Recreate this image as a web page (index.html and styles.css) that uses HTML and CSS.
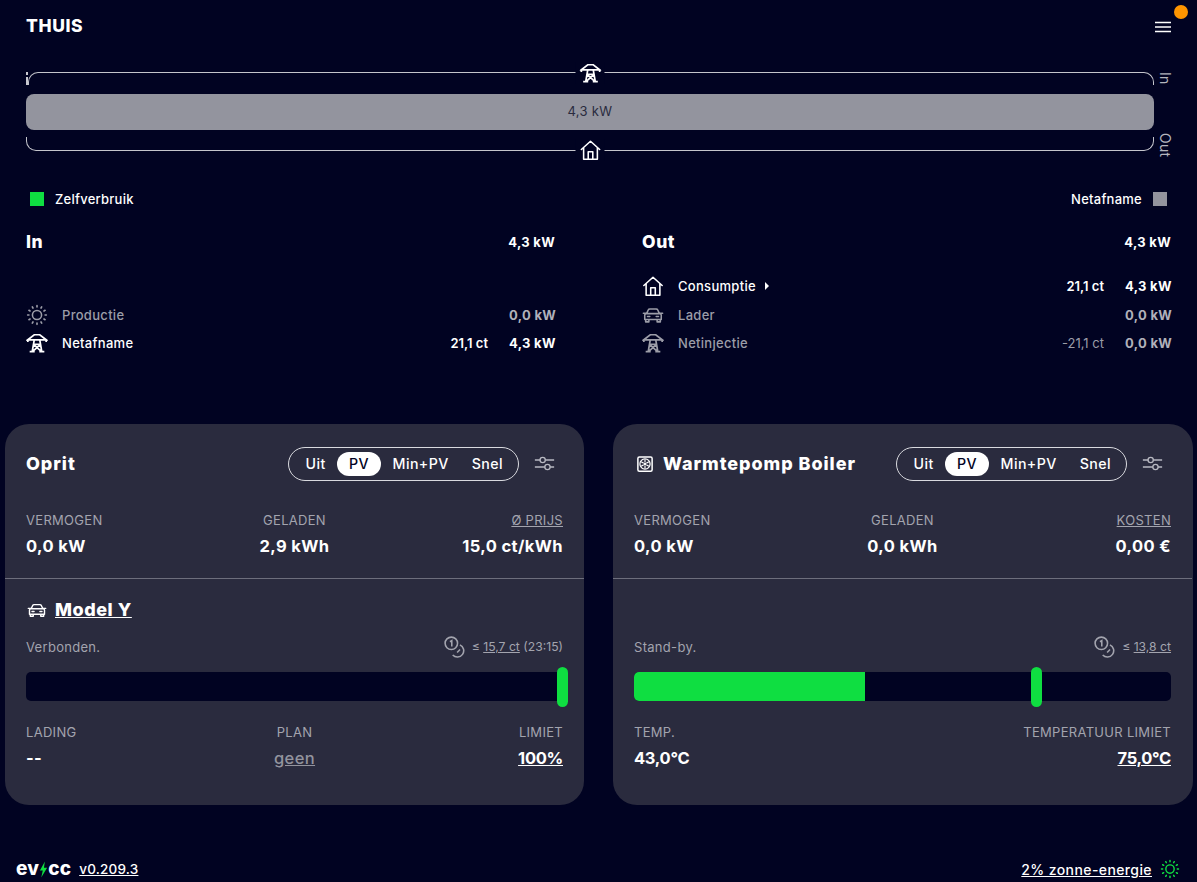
FILE: index.html
```html
<!DOCTYPE html>
<html lang="nl">
<head>
<meta charset="utf-8">
<title>evcc</title>
<link rel="stylesheet" href="styles.css">
</head>
<body>
<svg class="defs" width="0" height="0" aria-hidden="true">
  <symbol id="i-tower" viewBox="0 0 24 24"><path d="M9 3h6l7 5.500H2ZM2 8v3M22 8v3M9 8.500 6.800 21.500M15 8.500l2.200 13M8 13.500h8M8 13.500l9 8M16 13.500l-9 8M4 21.500h5.500M14.500 21.500H20" fill="none" stroke="currentColor" stroke-width="1.900"/></symbol>
  <symbol id="i-home" viewBox="0 0 24 24"><path d="M2 11.500 12 2.500l10 9M4.500 9.500V22h15V9.500M9.500 22v-8h5v8" fill="none" stroke="currentColor" stroke-width="1.700" stroke-linejoin="round" stroke-linecap="round"/></symbol>
  <symbol id="i-sun" viewBox="0 0 24 24"><circle cx="12" cy="12" r="5" fill="none" stroke="currentColor" stroke-width="1.700"/><path d="M12 1.800v1.400M12 20.800v1.400M1.800 12h1.400M20.800 12h1.400M6.900 3.200l.7 1.200M16.400 19.600l.7 1.200M3.200 6.900l1.200.7M19.600 16.400l1.200.7M3.200 17.100l1.200-.7M19.600 7.600l1.200-.7M6.900 20.800l.7-1.200M16.400 4.400l.7-1.200" fill="none" stroke="currentColor" stroke-width="1.800" stroke-linecap="round"/></symbol>
  <symbol id="i-car" viewBox="0 0 24 24"><path d="M5 10.500 6.800 6.500C7.100 5.800 7.800 5.500 8.500 5.500h7c.7 0 1.400.3 1.700 1L19 10.500M4.500 10.500h15c.8 0 1.500.7 1.500 1.500v5H3v-5c0-.8.700-1.500 1.500-1.500ZM1.500 10h3M19.500 10h3M4 17v2.500h3.500V17M16.500 17v2.500H20V17M6 13.700h2.500M15.500 13.700H18" fill="none" stroke="currentColor" stroke-width="1.700" stroke-linejoin="round" stroke-linecap="round"/></symbol>
  <symbol id="i-tune" viewBox="0 0 24 24"><path d="M1 8h6M12.800 8H23M1 16h11.500M18.300 16H23" fill="none" stroke="currentColor" stroke-width="1.500"/><circle cx="9.900" cy="8" r="3" fill="none" stroke="currentColor" stroke-width="1.500"/><circle cx="15.400" cy="16" r="3" fill="none" stroke="currentColor" stroke-width="1.500"/></symbol>
  <symbol id="i-coins" viewBox="0 0 24 24"><circle cx="8" cy="8" r="6.800" fill="none" stroke="currentColor" stroke-width="1.700"/><path d="M6.500 6.300 8.500 5v6.500" fill="none" stroke="currentColor" stroke-width="1.700"/><path d="M17.300 9.700a6.900 6.900 0 1 1-7.800 11" fill="none" stroke="currentColor" stroke-width="1.700"/><path d="M17.500 14.800 14.300 18" fill="none" stroke="currentColor" stroke-width="1.700"/></symbol>
  <symbol id="i-pump" viewBox="0 0 24 24"><rect x="2.500" y="2.500" width="19" height="19" rx="2" fill="none" stroke="currentColor" stroke-width="2"/><circle cx="12" cy="12" r="6.800" fill="none" stroke="currentColor" stroke-width="1.600"/><circle cx="12" cy="12" r="1.600" fill="currentColor"/><path d="M12 6v4M12 14v4M6.800 9l3.500 2M13.700 13l3.500 2M6.800 15l3.500-2M13.700 11l3.500-2" stroke="currentColor" stroke-width="1.500"/></symbol>
</svg>

<header class="topbar">
  <h1 class="site-title">THUIS</h1>
  <button class="menu" aria-label="Menu">
    <svg class="menu-icon" viewBox="0 0 16 12"><path d="M0 1.500h16M0 6h16M0 10.500h16" fill="none" stroke="currentColor" stroke-width="1.500"/></svg>
    <span class="menu-dot"></span>
  </button>
</header>

<section class="flow">
  <div class="flow-main">
    <div class="bracket bracket-top">
      <span class="flow-icon"><svg class="ic22"><use href="#i-tower"/></svg></span>
    </div>
    <div class="flow-bar">4,3 kW</div>
    <div class="bracket bracket-bottom">
      <span class="flow-icon"><svg class="ic22"><use href="#i-home"/></svg></span>
    </div>
    <span class="clip-tick"></span>
  </div>
  <div class="flow-side">
    <span>In</span>
    <span>Out</span>
  </div>
</section>

<div class="legend">
  <div class="legend-item"><span class="swatch swatch-green"></span>Zelfverbruik</div>
  <div class="legend-item">Netafname<span class="swatch swatch-gray"></span></div>
</div>

<section class="balance">
  <div class="balance-col">
    <div class="balance-head"><h2>In</h2><strong>4,3 kW</strong></div>
    <ul class="rows">
      <li class="row row-empty"></li>
      <li class="row muted">
        <svg class="ic22"><use href="#i-sun"/></svg><span class="row-name">Productie</span><span class="row-power">0,0 kW</span>
      </li>
      <li class="row active">
        <svg class="ic22"><use href="#i-tower"/></svg><span class="row-name">Netafname</span><span class="row-price">21,1 ct</span><span class="row-power">4,3 kW</span>
      </li>
    </ul>
  </div>
  <div class="balance-col">
    <div class="balance-head"><h2>Out</h2><strong>4,3 kW</strong></div>
    <ul class="rows">
      <li class="row active">
        <svg class="ic22"><use href="#i-home"/></svg><span class="row-name">Consumptie<i class="caret"></i></span><span class="row-price">21,1 ct</span><span class="row-power">4,3 kW</span>
      </li>
      <li class="row muted">
        <svg class="ic22"><use href="#i-car"/></svg><span class="row-name">Lader</span><span class="row-power">0,0 kW</span>
      </li>
      <li class="row muted">
        <svg class="ic22"><use href="#i-tower"/></svg><span class="row-name">Netinjectie</span><span class="row-price">-21,1 ct</span><span class="row-power">0,0 kW</span>
      </li>
    </ul>
  </div>
</section>

<main class="cards">
  <article class="card">
    <div class="card-head">
      <h3 class="card-title">Oprit</h3>
      <div class="modes"><span class="mode">Uit</span><span class="mode mode-on">PV</span><span class="mode">Min+PV</span><span class="mode">Snel</span></div>
      <svg class="tune"><use href="#i-tune"/></svg>
    </div>
    <div class="stats">
      <div class="stat"><div class="label">Vermogen</div><div class="value">0,0 kW</div></div>
      <div class="stat stat-mid"><div class="label">Geladen</div><div class="value">2,9 kWh</div></div>
      <div class="stat stat-end"><div class="label link">ø Prijs</div><div class="value">15,0 ct/kWh</div></div>
    </div>
    <hr class="divider">
    <div class="vehicle"><svg class="car"><use href="#i-car"/></svg><span class="vehicle-name">Model Y</span></div>
    <div class="status">
      <span>Verbonden.</span>
      <span class="smart"><svg class="coins"><use href="#i-coins"/></svg><span>≤ <u>15,7 ct</u> (23:15)</span></span>
    </div>
    <div class="track">
      <span class="knob" style="left:99.100%"></span>
    </div>
    <div class="stats stats-low">
      <div class="stat"><div class="label">Lading</div><div class="value">--</div></div>
      <div class="stat stat-mid"><div class="label">Plan</div><div class="value value-dim">geen</div></div>
      <div class="stat stat-end"><div class="label">Limiet</div><div class="value value-link">100%</div></div>
    </div>
  </article>

  <article class="card">
    <div class="card-head">
      <h3 class="card-title"><svg class="pump"><use href="#i-pump"/></svg>Warmtepomp Boiler</h3>
      <div class="modes"><span class="mode">Uit</span><span class="mode mode-on">PV</span><span class="mode">Min+PV</span><span class="mode">Snel</span></div>
      <svg class="tune"><use href="#i-tune"/></svg>
    </div>
    <div class="stats">
      <div class="stat"><div class="label">Vermogen</div><div class="value">0,0 kW</div></div>
      <div class="stat stat-mid"><div class="label">Geladen</div><div class="value">0,0 kWh</div></div>
      <div class="stat stat-end"><div class="label link">Kosten</div><div class="value">0,00 €</div></div>
    </div>
    <hr class="divider">
    <div class="vehicle"></div>
    <div class="status">
      <span>Stand-by.</span>
      <span class="smart"><svg class="coins"><use href="#i-coins"/></svg><span>≤ <u>13,8 ct</u></span></span>
    </div>
    <div class="track">
      <span class="fill" style="width:43%"></span>
      <span class="knob" style="left:74.100%"></span>
    </div>
    <div class="stats stats-low stats-two">
      <div class="stat"><div class="label">Temp.</div><div class="value value-tight">43,0°C</div></div>
      <div class="stat stat-end"><div class="label">Temperatuur limiet</div><div class="value value-link">75,0°C</div></div>
    </div>
  </article>
</main>

<footer class="footer">
  <div class="footer-left">
    <span class="logo">ev<svg class="bolt" viewBox="0 0 10 18"><path d="M6.500 0 1 10h3.200L2.500 18 9 7H5.500Z" fill="#0fde41"/></svg>cc</span>
    <u class="version">v0.209.3</u>
  </div>
  <div class="footer-right">
    <u>2% zonne-energie</u>
    <svg class="ic20 sun-green"><use href="#i-sun"/></svg>
  </div>
</footer>
</body>
</html>
```
FILE: styles.css
```css
* { box-sizing: border-box; }
html, body { margin: 0; padding: 0; }
body {
  width: 1197px;
  height: 882px;
  overflow: hidden;
  background: #010322;
  color: #fff;
  font-family: Inter, "Noto Sans", "Liberation Sans", sans-serif;
  font-size: 13px;
  letter-spacing: 0.3px;
}
.defs { position: absolute; }
h1, h2, h3, ul { margin: 0; padding: 0; list-style: none; }

.ic20 { width: 20px; height: 20px; display: block; }
.ic22 { width: 22px; height: 22px; display: block; flex: none; }

.topbar {
  height: 52px;
  display: flex;
  align-items: center;
  justify-content: space-between;
  padding: 0 26px;
}
.site-title { font-size: 17.500px; font-weight: 800; letter-spacing: 0.600px; margin-bottom: 2px; }
.menu {
  position: relative;
  width: 16px;
  height: 12px;
  padding: 0;
  margin-top: 1px;
  background: none;
  border: 0;
  color: #fff;
}
.menu-icon { display: block; width: 16px; height: 12px; }
.menu-dot {
  position: absolute;
  top: -16px;
  right: -17px;
  width: 14px;
  height: 14px;
  border-radius: 50%;
  background: #ff9500;
}

.flow {
  display: flex;
  margin-top: 20px;
  padding: 0 26px;
}
.flow-main { position: relative; width: 1128px; }
.clip-tick {
  position: absolute;
  left: 0;
  top: 0;
  width: 2px;
  height: 13px;
  background: linear-gradient(#c8c8d0 0 3px, transparent 3px 5px, #c8c8d0 5px);
}
.bracket {
  position: relative;
  border: 1px solid #c4c5cc;
  margin-left: 2px;
}
.bracket-top { height: 13px; border-bottom: 0; border-radius: 10px 10px 0 0; }
.bracket-bottom { height: 14px; margin-top: 7px; margin-left: 0; border-top: 0; border-radius: 0 0 10px 10px; }
.flow-icon {
  position: absolute;
  left: 50%;
  transform: translateX(-50%);
  padding: 0 3.500px;
  background: #010322;
  line-height: 0;
}
.bracket-top .flow-icon { top: -11px; margin-left: -1px; }
.bracket-bottom .flow-icon { bottom: -11px; }
.flow-bar {
  margin-top: 9px;
  height: 36px;
  border-radius: 8px;
  background: #93949e;
  color: #2a2b3e;
  font-size: 13px;
  padding-bottom: 2px;
  display: flex;
  align-items: center;
  justify-content: center;
}
.flow-side {
  width: 17px;
  height: 85px;
  display: flex;
  flex-direction: column;
  justify-content: space-between;
  align-items: flex-end;
  color: #b4b5bd;
  font-size: 14px;
}
.flow-side span { writing-mode: vertical-rl; line-height: 12px; }

.legend {
  display: flex;
  justify-content: space-between;
  padding: 0 30px;
  margin-top: 35px;
  height: 14px;
  font-weight: 500;
  letter-spacing: 0.250px;
}
.legend-item { display: flex; align-items: center; gap: 11px; line-height: 14px; }
.swatch { width: 14px; height: 14px; display: block; }
.swatch-green { background: #0fde41; }
.swatch-gray { background: #93949e; }

.balance {
  display: grid;
  grid-template-columns: 1fr 1fr;
  column-gap: 87px;
  padding: 0 26px;
  margin-top: 24px;
}
.balance-head {
  display: flex;
  justify-content: space-between;
  align-items: center;
  height: 22px;
}
.balance-head h2 { font-size: 17.500px; font-weight: 800; letter-spacing: 0.600px; }
.balance-head strong { font-weight: 700; position: relative; top: 1px; }
.rows { margin-top: 20px; }
.row {
  display: flex;
  align-items: center;
  height: 28.500px;
}
.row .ic22 { margin-right: 14px; }
.row-name { flex: 1; display: flex; align-items: center; }
.row-price { margin-right: 21px; letter-spacing: 0; }
.row-power { width: 46px; text-align: right; font-weight: 700; white-space: nowrap; }
.active { color: #fff; }
.active .row-name { font-weight: 500; }
.active .row-price { font-weight: 600; }
.muted { color: #9c9da8; }
.muted .row-name { font-weight: 500; }
.muted .row-power { color: #b0b1ba; }
.caret {
  width: 0;
  height: 0;
  margin-left: 9px;
  border-left: 4px solid #fff;
  border-top: 4px solid transparent;
  border-bottom: 4px solid transparent;
}

.cards {
  display: grid;
  grid-template-columns: 579px 579.500px;
  column-gap: 29px;
  margin-top: 66px;
  padding-left: 5px;
}
.card {
  height: 381px;
  padding: 23px 21px 0;
  border-radius: 24px;
  background: #2a2b3e;
}
.card + .card { padding-right: 21.500px; }
.card-head {
  display: flex;
  align-items: center;
  height: 34px;
  padding-right: 8px;
}
.card-title {
  flex: 1;
  display: flex;
  align-items: center;
  font-size: 18px;
  font-weight: 800;
  letter-spacing: 0.950px;
}
.pump { margin: 0 9px 0 2px; width: 18px; height: 18px; }
.modes {
  display: flex;
  align-items: center;
  width: 231px;
  height: 34px;
  padding: 0 5px;
  border: 1px solid #d9dadf;
  border-radius: 17px;
  font-size: 14.200px;
  font-weight: 500;
  letter-spacing: 0.400px;
}
.mode { padding: 0 11.500px; height: 24px; line-height: 24px; white-space: nowrap; }
.mode-on {
  padding: 0 12px;
  border-radius: 12px;
  background: #fff;
  color: #010322;
}
.tune { width: 21px; height: 21px; margin-left: 15px; color: #b8b9c2; flex: none; }

.stats {
  display: grid;
  grid-template-columns: 1fr 1fr 1fr;
  margin-top: 32px;
}
.stats-low { margin-top: 24px; }
.stats-two { grid-template-columns: 1fr 1fr; }
.stat-mid { text-align: center; }
.stat-end { text-align: right; }
.label {
  height: 14px;
  line-height: 14px;
  color: #a3a4ae;
  font-size: 13px;
  text-transform: uppercase;
  letter-spacing: 0.300px;
}
.link { text-decoration: underline; }
.value {
  margin-top: 9px;
  height: 20px;
  line-height: 20px;
  font-size: 16.500px;
  font-weight: 700;
  letter-spacing: 0.400px;
}
.value-link { text-decoration: underline; letter-spacing: -0.300px; }
.value-tight { letter-spacing: -0.300px; }
.value-dim { color: #93949e; font-weight: 500; text-decoration: underline; }

.divider {
  margin: 22px -21px 0;
  height: 1px;
  border: 0;
  background: #6d6e7c;
}
.vehicle {
  display: flex;
  align-items: center;
  gap: 8px;
  height: 24px;
  margin-top: 19px;
}
.car { width: 20px; height: 20px; margin-left: 1px; }
.vehicle-name { font-size: 18px; font-weight: 800; letter-spacing: 0.550px; text-decoration: underline; }
.status {
  display: flex;
  justify-content: space-between;
  align-items: center;
  height: 14px;
  margin-top: 18px;
  color: #a3a4ae;
  font-size: 13px;
}
.smart { display: flex; align-items: center; gap: 6px; white-space: nowrap; font-size: 12.200px; letter-spacing: 0; }
.coins { width: 22px; height: 22px; }
.track {
  position: relative;
  height: 29px;
  margin-top: 18px;
  border-radius: 5px;
  background: #010322;
}
.fill {
  display: block;
  height: 100%;
  background: #0fde41;
  border-radius: 5px 0 0 5px;
}
.knob {
  position: absolute;
  top: -5px;
  width: 11px;
  height: 40px;
  border-radius: 6px;
  background: #0fde41;
  transform: translateX(-1px);
}

.footer {
  display: flex;
  justify-content: space-between;
  align-items: center;
  height: 25px;
  margin-top: 52px;
  padding: 0 17px 0 16px;
  font-size: 14px;
  font-weight: 500;
  letter-spacing: 0.400px;
}
.footer-left, .footer-right { display: flex; align-items: center; }
.footer-right { gap: 8px; }
.logo {
  display: flex;
  align-items: center;
  font-size: 19px;
  font-weight: 800;
  letter-spacing: 0.200px;
  line-height: 20px;
}
.bolt { width: 9px; height: 17px; }
.version { margin-left: 8px; font-size: 13.500px; letter-spacing: 0.200px; }
.sun-green { color: #0fde41; }
```
